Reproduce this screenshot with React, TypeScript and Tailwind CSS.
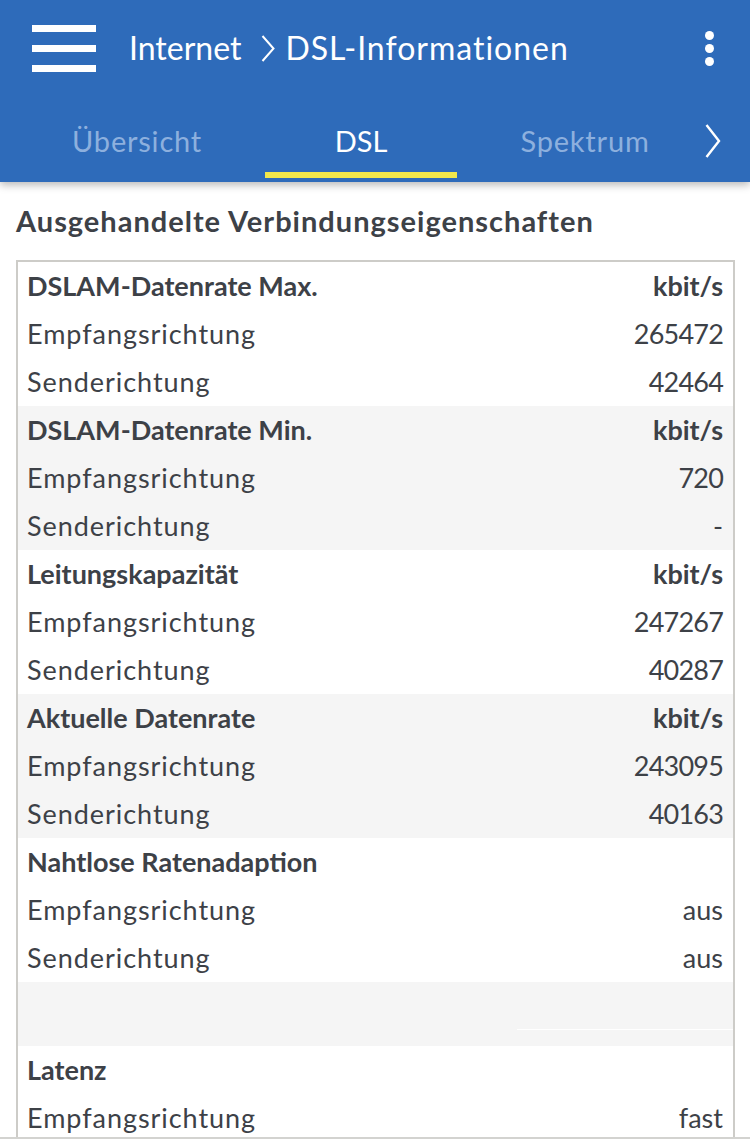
import React from 'react';

interface Row {
  label: string;
  value: string;
}

interface Group {
  title: string;
  unit: string;
  rows: Row[];
}

const groups: Group[] = [
  {
    title: 'DSLAM-Datenrate Max.',
    unit: 'kbit/s',
    rows: [
      { label: 'Empfangsrichtung', value: '265472' },
      { label: 'Senderichtung', value: '42464' },
    ],
  },
  {
    title: 'DSLAM-Datenrate Min.',
    unit: 'kbit/s',
    rows: [
      { label: 'Empfangsrichtung', value: '720' },
      { label: 'Senderichtung', value: '-' },
    ],
  },
  {
    title: 'Leitungskapazität',
    unit: 'kbit/s',
    rows: [
      { label: 'Empfangsrichtung', value: '247267' },
      { label: 'Senderichtung', value: '40287' },
    ],
  },
  {
    title: 'Aktuelle Datenrate',
    unit: 'kbit/s',
    rows: [
      { label: 'Empfangsrichtung', value: '243095' },
      { label: 'Senderichtung', value: '40163' },
    ],
  },
  {
    title: 'Nahtlose Ratenadaption',
    unit: '',
    rows: [
      { label: 'Empfangsrichtung', value: 'aus' },
      { label: 'Senderichtung', value: 'aus' },
    ],
  },
];

// nur die sichtbaren Zeilen
const latenz: Group = {
  title: 'Latenz',
  unit: '',
  rows: [{ label: 'Empfangsrichtung', value: 'fast' }],
};

const tabs = ['Übersicht', 'DSL', 'Spektrum'];

const TableRow = ({ label, value, bold }: { label: string; value: string; bold?: boolean }) => {
  const numeric = /^\d+$/.test(value);
  return (
    <div className="flex h-[48px] items-center justify-between pl-[9px] pr-[10px]">
      <span className={bold ? 'font-bold' : 'tracking-[0.95px]'}>{label}</span>
      <span className={bold ? 'font-bold' : numeric ? 'tracking-[-0.8px]' : ''}>{value}</span>
    </div>
  );
};

const GroupBlock = ({ group, shaded }: { group: Group; shaded: boolean }) => (
  <div className={shaded ? 'bg-[#f5f5f5]' : 'bg-white'}>
    <TableRow label={group.title} value={group.unit} bold />
    {group.rows.map((r, i) => (
      <TableRow key={i} label={r.label} value={r.value} />
    ))}
  </div>
);

export default function App() {
  return (
    <div
      className="flex h-[1146px] w-[750px] flex-col overflow-hidden bg-white text-[#3d4147]"
      style={{ fontFamily: 'Lato, "Noto Sans", sans-serif' }}
    >
      {/* Kopfzeile */}
      <header className="relative z-10 h-[182px] shrink-0 bg-[#2e6bba] shadow-[0_3px_8px_rgba(0,0,0,0.28)]">
        <div className="flex h-[96px] items-center">
          <div className="ml-[32px] flex w-[64px] flex-col gap-[13px]">
            <div className="h-[7px] bg-white" />
            <div className="h-[7px] bg-white" />
            <div className="h-[7px] bg-white" />
          </div>
          <div className="ml-[33px] flex flex-1 items-center text-[32px] text-white">
            <span>Internet</span>
            <svg width="14" height="27" viewBox="0 0 14 27" className="ml-[20px] mr-[10px]">
              <polyline points="1.5,1 12.5,13.5 1.5,26" fill="none" stroke="white" strokeWidth="2" />
            </svg>
            <span className="tracking-[1px]">DSL-Informationen</span>
          </div>
          <div className="mr-[36px] flex flex-col gap-[4px]">
            <div className="h-[9px] w-[9px] rounded-full bg-white" />
            <div className="h-[9px] w-[9px] rounded-full bg-white" />
            <div className="h-[9px] w-[9px] rounded-full bg-white" />
          </div>
        </div>
        <div className="flex h-[86px] items-start pl-[41px]">
          <div className="flex gap-[32px]">
            {tabs.map(t => {
              const active = t === 'DSL';
              return (
                <div key={t} className="flex w-[192px] flex-col items-center">
                  <div
                    className={`flex h-[76px] items-center pt-[14px] text-[29px] ${active ? 'text-white' : 'tracking-[0.8px] text-[#8db0de]'}`}
                  >
                    {t}
                  </div>
                  <div className={`h-[6px] w-full ${active ? 'bg-[#f2e84c]' : ''}`} />
                </div>
              );
            })}
          </div>
          <div className="ml-[24px] flex h-[76px] items-center pt-[14px]">
            <svg width="16" height="34" viewBox="0 0 16 34">
              <polyline points="1.5,1 14,17 1.5,33" fill="none" stroke="white" strokeWidth="2.4" />
            </svg>
          </div>
        </div>
      </header>

      {/* Inhalt */}
      <main className="min-h-0 flex-1 overflow-hidden">
        <div className="flex h-[78px] items-center px-[16px] text-[29px] font-bold tracking-[1px]">
          Ausgehandelte Verbindungseigenschaften
        </div>
        <div className="mx-[16px] w-[719px] border-2 border-[#cdccc8] text-[27px]">
          {groups.map((g, i) => (
            <GroupBlock key={g.title} group={g} shaded={i % 2 === 1} />
          ))}
          <div className="flex h-[64px] bg-[#f5f5f5]">
            <div className="w-[499px]" />
            <div className="h-[48px] flex-1 border-b border-white" />
          </div>
          <GroupBlock group={latenz} shaded={false} />
        </div>
      </main>

      <footer className="h-[9px] shrink-0 border-t-2 border-[#d3d3d0] bg-white" />
    </div>
  );
}
